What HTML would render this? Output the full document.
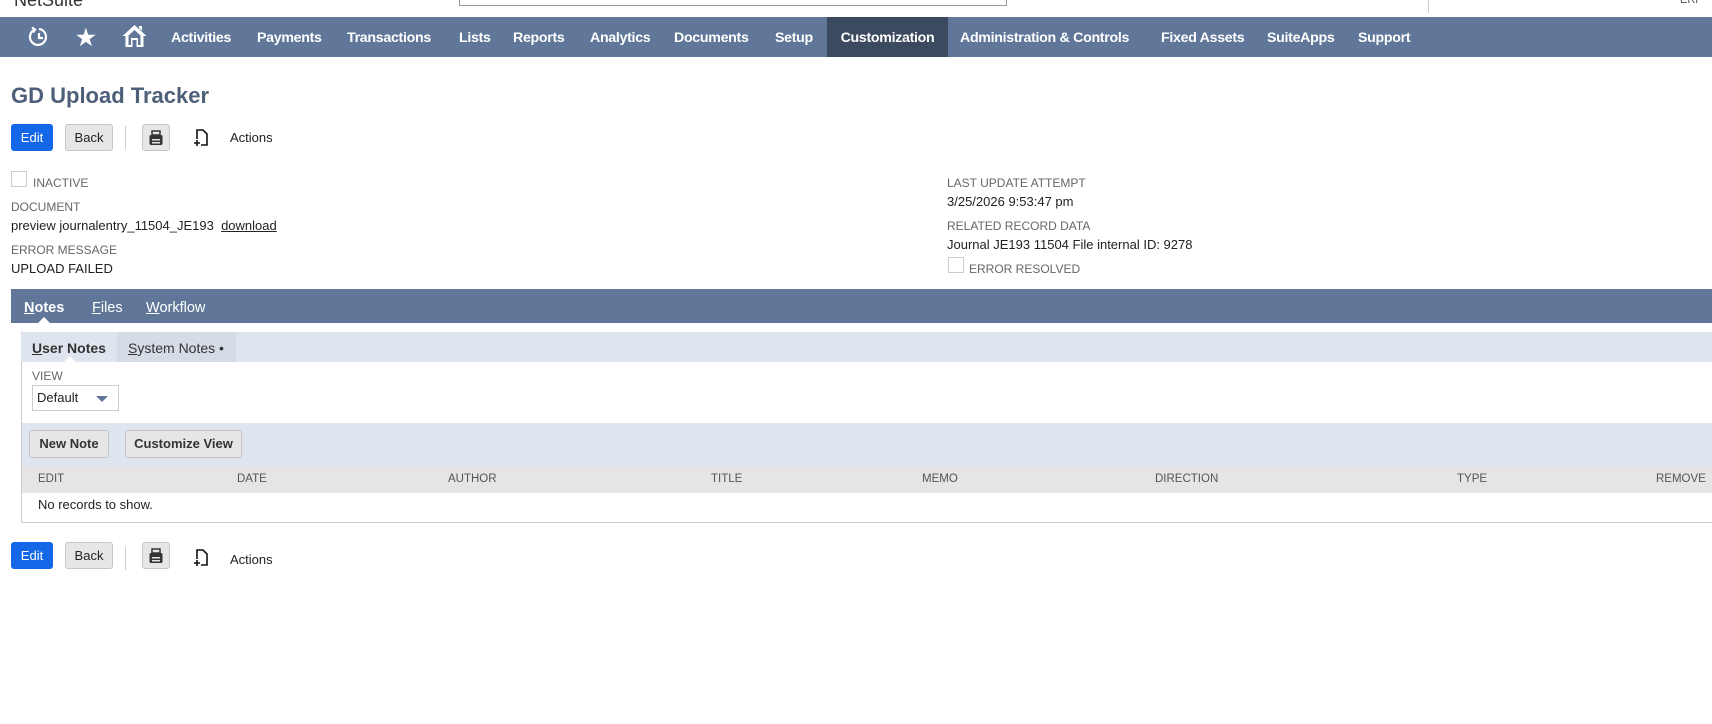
<!DOCTYPE html>
<html><head><meta charset="utf-8"><style>
*{box-sizing:border-box;margin:0;padding:0}
body{width:1712px;height:724px;background:#fff;font-family:"Liberation Sans",Arial,sans-serif;position:relative;overflow:hidden;color:#222}
.a{position:absolute;white-space:nowrap}
#nav{position:absolute;left:0;top:17px;width:1712px;height:40px;background:#607799}
#nav .i{position:absolute;top:1px;height:40px;line-height:40px;color:#fff;font-weight:bold;font-size:14.2px;letter-spacing:-0.3px}
.btn{position:absolute;height:27px;line-height:25px;font-size:13px;border:1px solid #c6c6c6;border-radius:3px;background:#e6e6e6;text-align:center;color:#222}
.blue{background:#1467e6;border-color:#1467e6;color:#fff}
.lbl{font-size:12px;color:#666}
.val{font-size:13px;color:#222}
.cb{position:absolute;width:16px;height:16px;border:1px solid #ccc;background:#fff}
.th{position:absolute;top:473px;font-size:11.5px;color:#555}
</style></head><body>
<div class="a" style="left:14px;top:-10px;font-size:18px;color:#333">NetSuite</div>
<div class="a" style="left:459px;top:-2px;width:548px;height:8px;border:1px solid #999;border-top:none"></div>
<div class="a" style="left:1428px;top:0;width:1px;height:13px;background:#ccc"></div>
<div class="a" style="left:1680px;top:-6px;font-size:11px;color:#555">ERP</div>
<div id="nav">
<svg class="a" style="left:27px;top:8px" width="24" height="24" viewBox="0 0 24 24" fill="none" stroke="#fff" stroke-width="2.2"><path d="M8 4.5A8 8 0 1 0 12 4"/><path d="M12 8v5h4"/><path d="M5 2.5l3 2-2 3" /></svg>
<div class="i" style="left:76px;font-size:22px">★</div>
<svg class="a" style="left:122px;top:7px" width="25" height="24" viewBox="0 0 25 24" fill="#fff"><path d="M12.5 1L0.5 12h3v11h7v-7h4v7h7V12h3z M17 2h3v5l-3-3z"/><path d="M12.5 6l-6 5.5V21h2.5v-7h7v7h2.5v-9.5z" fill="#607799"/></svg>
<div class="i" style="left:171px">Activities</div>
<div class="i" style="left:257px">Payments</div>
<div class="i" style="left:347px">Transactions</div>
<div class="i" style="left:459px">Lists</div>
<div class="i" style="left:513px">Reports</div>
<div class="i" style="left:590px">Analytics</div>
<div class="i" style="left:674px">Documents</div>
<div class="i" style="left:775px">Setup</div>
<div class="i" style="left:827px;top:0;height:40px;width:121px;background:#3b4a5f;text-align:center;line-height:42px">Customization</div>
<div class="i" style="left:960px">Administration &amp; Controls</div>
<div class="i" style="left:1161px">Fixed Assets</div>
<div class="i" style="left:1267px">SuiteApps</div>
<div class="i" style="left:1358px">Support</div>
</div>
<div class="a" style="left:11px;top:83px;font-size:22px;font-weight:bold;color:#4d5f79">GD Upload Tracker</div>

<div class="btn blue" style="left:11px;top:124px;width:42px">Edit</div>
<div class="btn" style="left:65px;top:124px;width:48px">Back</div>
<div class="a" style="left:125px;top:126px;width:1px;height:23px;background:#ccc"></div>
<div class="btn" style="left:142px;top:124px;width:28px"><svg width="16" height="16" viewBox="0 0 16 16" style="margin-top:5px"><path d="M4 1h8v4H4z" fill="none" stroke="#333" stroke-width="1.5"/><rect x="1.5" y="5" width="13" height="10" rx="1.5" fill="#333"/><rect x="4" y="9" width="8" height="1.5" fill="#e6e6e6"/><rect x="4" y="12" width="8" height="1.5" fill="#e6e6e6"/></svg></div>
<svg class="a" style="left:193px;top:128px" width="16" height="20" viewBox="0 0 16 20" fill="none" stroke="#111" stroke-width="1.6"><path d="M4 11V2h6l4 4v11H8"/><path d="M1 15h6M4 12v6"/></svg>
<div class="a" style="left:230px;top:130px;font-size:13px">Actions</div>

<div class="cb" style="left:11px;top:171px"></div>
<div class="a lbl" style="left:33px;top:176px">INACTIVE</div>
<div class="a lbl" style="left:11px;top:200px">DOCUMENT</div>
<div class="a val" style="left:11px;top:218px">preview journalentry_11504_JE193 &nbsp;<u>download</u></div>
<div class="a lbl" style="left:11px;top:243px">ERROR MESSAGE</div>
<div class="a val" style="left:11px;top:261px">UPLOAD FAILED</div>

<div class="a lbl" style="left:947px;top:176px">LAST UPDATE ATTEMPT</div>
<div class="a val" style="left:947px;top:194px">3/25/2026 9:53:47 pm</div>
<div class="a lbl" style="left:947px;top:219px">RELATED RECORD DATA</div>
<div class="a val" style="left:947px;top:237px">Journal JE193 11504 File internal ID: 9278</div>
<div class="cb" style="left:948px;top:257px"></div>
<div class="a lbl" style="left:969px;top:262px">ERROR RESOLVED</div>

<div class="a" style="left:11px;top:289px;width:1701px;height:34px;background:#607799"></div>
<div class="a" style="left:24px;top:300px;font-size:14.5px;font-weight:bold;color:#fff"><u>N</u>otes</div>
<div class="a" style="left:92px;top:300px;font-size:14.5px;color:#fff"><u>F</u>iles</div>
<div class="a" style="left:146px;top:300px;font-size:14.5px;color:#fff"><u>W</u>orkflow</div>
<div class="a" style="left:38px;top:317px;width:0;height:0;border-left:6px solid transparent;border-right:6px solid transparent;border-bottom:6px solid #fff"></div>

<div class="a" style="left:21px;top:331px;width:1691px;height:192px;border:1px solid #ccc;border-right:none;border-top:none"></div>
<div class="a" style="left:21px;top:332px;width:1691px;height:30px;background:#dfe5ee"></div>
<div class="a" style="left:117px;top:332px;width:119px;height:30px;background:#d5dce6"></div>
<div class="a" style="left:32px;top:340px;font-size:14px;font-weight:bold;color:#333"><u>U</u>ser Notes</div>
<div class="a" style="left:128px;top:340px;font-size:14px;color:#333"><u>S</u>ystem Notes •</div>
<div class="a" style="left:64px;top:356px;width:0;height:0;border-left:6px solid transparent;border-right:6px solid transparent;border-bottom:6px solid #fff"></div>

<div class="a lbl" style="left:32px;top:369px">VIEW</div>
<div class="a" style="left:32px;top:385px;width:87px;height:26px;border:1px solid #ccc;font-size:13px;line-height:24px;padding-left:4px">Default<span style="position:absolute;right:10px;top:10px;border-left:6px solid transparent;border-right:6px solid transparent;border-top:6px solid #607799"></span></div>

<div class="a" style="left:22px;top:423px;width:1690px;height:43px;background:#dfe5ee"></div>
<div class="btn" style="left:29px;top:430px;width:80px;height:28px;line-height:26px;font-weight:bold;font-size:13px;color:#333">New Note</div>
<div class="btn" style="left:125px;top:430px;width:117px;height:28px;line-height:26px;font-weight:bold;font-size:13px;color:#333">Customize View</div>
<div class="a" style="left:22px;top:466px;width:1690px;height:27px;background:#e5e5e5"></div>
<div class="th" style="left:38px">EDIT</div>
<div class="th" style="left:237px">DATE</div>
<div class="th" style="left:448px">AUTHOR</div>
<div class="th" style="left:711px">TITLE</div>
<div class="th" style="left:922px">MEMO</div>
<div class="th" style="left:1155px">DIRECTION</div>
<div class="th" style="left:1457px">TYPE</div>
<div class="th" style="left:1656px">REMOVE</div>
<div class="a val" style="left:38px;top:497px">No records to show.</div>

<div class="btn blue" style="left:11px;top:542px;width:42px">Edit</div>
<div class="btn" style="left:65px;top:542px;width:48px">Back</div>
<div class="a" style="left:125px;top:547px;width:1px;height:23px;background:#ccc"></div>
<div class="btn" style="left:142px;top:542px;width:28px"><svg width="16" height="16" viewBox="0 0 16 16" style="margin-top:5px"><path d="M4 1h8v4H4z" fill="none" stroke="#333" stroke-width="1.5"/><rect x="1.5" y="5" width="13" height="10" rx="1.5" fill="#333"/><rect x="4" y="9" width="8" height="1.5" fill="#e6e6e6"/><rect x="4" y="12" width="8" height="1.5" fill="#e6e6e6"/></svg></div>
<svg class="a" style="left:193px;top:548px" width="16" height="20" viewBox="0 0 16 20" fill="none" stroke="#111" stroke-width="1.6"><path d="M4 11V2h6l4 4v11H8"/><path d="M1 15h6M4 12v6"/></svg>
<div class="a" style="left:230px;top:552px;font-size:13px">Actions</div>
</body></html>
